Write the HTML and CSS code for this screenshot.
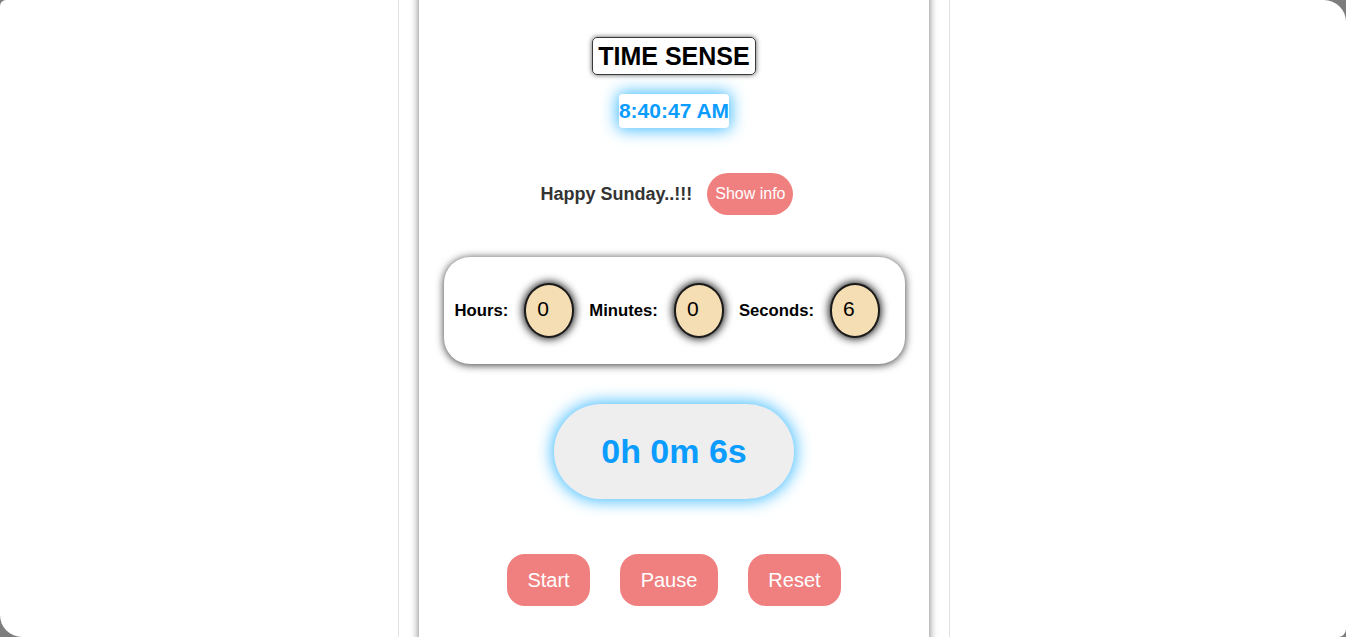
FILE: index.html
```html
<!DOCTYPE html>
<html lang="en">
<head>
<meta charset="utf-8">
<title>Time Sense</title>
<link rel="stylesheet" href="styles.css">
</head>
<body>
<div class="page">
  <div class="column">
    <div class="card">
      <h1 class="title">TIME SENSE</h1>
      <div class="clock">8:40:47 AM</div>
      <div class="greeting-row">
        <span class="greeting">Happy Sunday..!!!</span>
        <button class="pill info-btn">Show info</button>
      </div>
      <div class="inputs">
        <span class="label">Hours:</span>
        <div class="oval">0</div>
        <span class="label">Minutes:</span>
        <div class="oval">0</div>
        <span class="label">Seconds:</span>
        <div class="oval">6</div>
      </div>
      <div class="display">0h 0m 6s</div>
      <div class="controls">
        <button class="pill ctrl">Start</button>
        <button class="pill ctrl">Pause</button>
        <button class="pill ctrl">Reset</button>
      </div>
    </div>
  </div>
</div>
</body>
</html>
```
FILE: styles.css
```css
html, body {
  margin: 0;
  padding: 0;
  background: #7d7d7d;
}
body {
  font-family: "Liberation Sans", Arial, sans-serif;
}
.page {
  width: 1346px;
  height: 637px;
  background: #ffffff;
  border-radius: 6px 22px 8px 22px;
  overflow: hidden;
  display: flex;
  justify-content: center;
}
.column {
  width: 510px;
  margin-left: 2px;
  height: 100%;
  border-left: 1px solid #e2e2e2;
  border-right: 1px solid #e2e2e2;
  padding: 0 20px;
}
.card {
  margin-top: -20px;
  height: 700px;
  background: #fff;
  box-shadow: 0 0 8px rgba(0, 0, 0, 0.55);
  display: flex;
  flex-direction: column;
  align-items: center;
}
.title {
  margin: 57px 0 0;
  font-size: 25px;
  line-height: 28px;
  font-weight: bold;
  color: #000;
  padding: 4px 5px 4px 5px;
  border: 1px solid #3a3a3a;
  border-radius: 5px;
  box-shadow: 0 0 5px rgba(0, 0, 0, 0.65);
}
.clock {
  margin-top: 19px;
  font-size: 21px;
  line-height: 24px;
  padding: 5px 0;
  font-weight: bold;
  color: #0a9cff;
  background: #fff;
  border-radius: 4px;
  box-shadow: 0 0 16px 2px #45bdff;
}
.greeting-row {
  margin-top: 45px;
  display: flex;
  align-items: center;
  gap: 15px;
  margin-right: 14px;
}
.greeting {
  font-size: 18px;
  font-weight: bold;
  color: #333;
}
.pill {
  font-family: "Liberation Sans", Arial, sans-serif;
  border: none;
  background: #f08080;
  color: #fff;
}
.info-btn {
  font-size: 16px;
  line-height: 18px;
  padding: 12px 8px;
  border-radius: 21px;
}
.inputs {
  margin-top: 42px;
  width: 461px;
  height: 107px;
  box-sizing: border-box;
  padding-left: 11px;
  border-radius: 26px;
  background: #fff;
  box-shadow: 0 1px 9px rgba(0, 0, 0, 0.8);
  display: flex;
  align-items: center;
}
.label {
  font-size: 16.7px;
  font-weight: bold;
  color: #000;
  margin-right: 16px;
}
.oval {
  width: 50px;
  height: 55px;
  box-sizing: border-box;
  border: 2px solid #1a1a1a;
  border-radius: 25px / 27px;
  background: #f5deb3;
  box-shadow: 0 0 9px 1px rgba(0, 0, 0, 0.95);
  font-size: 21px;
  line-height: 48px;
  padding-left: 11px;
  margin-right: 15px;
  color: #000;
}
.display {
  margin-top: 40px;
  width: 240px;
  height: 95px;
  border-radius: 48px;
  background: #eeeeee;
  box-shadow: 0 0 16px 2px #45bdff;
  display: flex;
  align-items: center;
  justify-content: center;
  font-size: 34px;
  font-weight: bold;
  color: #0a9cff;
}
.controls {
  margin-top: 55px;
  display: flex;
  gap: 30px;
}
.ctrl {
  font-size: 20px;
  line-height: 22px;
  padding: 15px 20.5px;
  border-radius: 18px;
}
```
